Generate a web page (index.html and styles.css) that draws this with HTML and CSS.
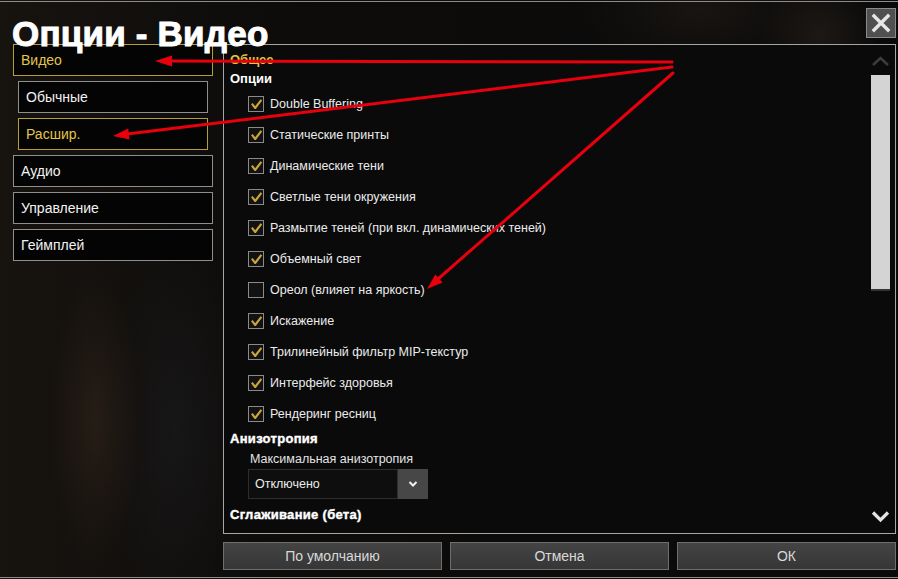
FILE: index.html
```html
<!DOCTYPE html>
<html lang="ru">
<head>
    <meta charset="UTF-8">
    <meta name="viewport" content="width=device-width, initial-scale=1.0">
    <title>Опции - Видео</title>
    <link rel="stylesheet" href="styles.css">
</head>
<body>
    <div class="frame">
        <div class="header">
            <h1 class="title">Опции - Видео</h1>
            <div class="close-btn">
                <svg width="20" height="20" viewBox="0 0 20 20">
                    <path d="M3 3 L17 17 M17 3 L3 17" stroke="#e6e6e6" stroke-width="3.4" stroke-linecap="square"/>
                </svg>
            </div>
        </div>

        <div class="main-row">
            <div class="sidebar">
                <div class="nav-item active">Видео</div>
                <div class="nav-item sub">Обычные</div>
                <div class="nav-item sub active">Расшир.</div>
                <div class="nav-item">Аудио</div>
                <div class="nav-item">Управление</div>
                <div class="nav-item">Геймплей</div>
            </div>

            <div class="panel">
                <div class="panel-content">
                    <div class="group-title">Общее</div>
                    <div class="section-title">Опции</div>

                    <div class="option"><span class="check on"></span>Double Buffering</div>
                    <div class="option"><span class="check on"></span>Статические принты</div>
                    <div class="option"><span class="check on"></span>Динамические тени</div>
                    <div class="option"><span class="check on"></span>Светлые тени окружения</div>
                    <div class="option"><span class="check on"></span>Размытие теней (при вкл. динамических теней)</div>
                    <div class="option"><span class="check on"></span>Объемный свет</div>
                    <div class="option"><span class="check"></span>Ореол (влияет на яркость)</div>
                    <div class="option"><span class="check on"></span>Искажение</div>
                    <div class="option"><span class="check on"></span>Трилинейный фильтр MIP-текстур</div>
                    <div class="option"><span class="check on"></span>Интерфейс здоровья</div>
                    <div class="option"><span class="check on"></span>Рендеринг ресниц</div>

                    <div class="section-title heavy">Анизотропия</div>
                    <div class="field-label">Максимальная анизотропия</div>
                    <div class="select">
                        <span class="select-value">Отключено</span>
                        <span class="select-arrow">
                            <svg width="10" height="8" viewBox="0 0 10 8">
                                <path d="M1.5 2 L5 5.5 L8.5 2" fill="none" stroke="#f0f0f0" stroke-width="2"/>
                            </svg>
                        </span>
                    </div>
                    <div class="section-title heavy last">Сглаживание (бета)</div>
                </div>

                <div class="scrollbar">
                    <svg class="scroll-up" width="19" height="12" viewBox="0 0 19 12">
                        <path d="M2 10 L9.5 3 L17 10" fill="none" stroke="#3c3c3c" stroke-width="2.6"/>
                    </svg>
                    <div class="thumb"></div>
                    <div class="scroll-space"></div>
                    <svg class="scroll-down" width="19" height="13" viewBox="0 0 19 13">
                        <path d="M2 2.5 L9.5 10 L17 2.5" fill="none" stroke="#e4e4e4" stroke-width="3.2"/>
                    </svg>
                </div>
            </div>
        </div>

        <div class="button-row">
            <div class="btn">По умолчанию</div>
            <div class="btn">Отмена</div>
            <div class="btn">ОК</div>
        </div>
    </div>

    <!-- red annotation arrows on top of the screenshot -->
    <svg class="arrows" width="898" height="579" viewBox="0 0 898 579">
        <g stroke="#e8000c" stroke-width="3" stroke-linecap="round">
            <line x1="672" y1="62" x2="168" y2="61"/>
            <line x1="672" y1="67" x2="127" y2="134"/>
            <line x1="673" y1="73" x2="438" y2="279"/>
        </g>
        <g fill="#e8000c">
            <polygon points="155,61 172,55.5 172,66.5"/>
            <polygon points="113,136 129.6,139.5 128.2,128.5"/>
            <polygon points="427,289 442.6,282.4 435.4,274.4"/>
        </g>
    </svg>
</body>
</html>
```

FILE: styles.css
```css
body {
    margin: 0;
    padding: 0;
    position: relative;
    width: 898px;
    height: 579px;
    overflow: hidden;
    font-family: 'Liberation Sans', Arial, sans-serif;
    color: #e8e8e8;
    background-color: #0b0a09;
    background-image:
        radial-gradient(ellipse 45px 150px at 95px 420px, rgba(60, 44, 30, 0.45), transparent),
        radial-gradient(ellipse 70px 200px at 175px 430px, rgba(30, 30, 34, 0.5), transparent),
        radial-gradient(ellipse 60px 60px at 820px 35px, rgba(40, 34, 28, 0.6), transparent),
        radial-gradient(ellipse 120px 60px at 700px 10px, rgba(36, 30, 24, 0.5), transparent),
        linear-gradient(to right, #17130f, #0d0c0b 30%, #0b0a0a);
}
.frame {
    margin-top: 1px;
    height: 575px;
    border-top: 1px solid #8c8c8c;
    border-bottom: 1px solid #8c8c8c;
    padding: 0 2px 0 13px;
    display: flex;
    flex-direction: column;
}
.header {
    height: 42px;
    display: flex;
    justify-content: space-between;
    align-items: flex-start;
}
.title {
    margin: 14px 0 0 -1px;
    font-size: 35px;
    line-height: 35px;
    font-weight: bold;
    color: #ffffff;
    -webkit-text-stroke: 1px #ffffff;
    letter-spacing: 0.2px;
    position: relative;
    z-index: 1;
}
.close-btn {
    margin-top: 6px;
    width: 28px;
    height: 28px;
    border: 1px solid #8a8a8a;
    background-color: #505050;
    display: flex;
    align-items: center;
    justify-content: center;
}
.main-row {
    display: flex;
    gap: 10px;
    height: 490px;
}
.sidebar {
    width: 200px;
    display: flex;
    flex-direction: column;
    gap: 5px;
}
.nav-item {
    height: 30px;
    border: 1px solid #8e8e8e;
    background-color: #040404;
    color: #f2f2f2;
    font-size: 14px;
    line-height: 31px;
    padding-left: 7px;
}
.nav-item.sub {
    margin: 0 5px;
}
.nav-item.active {
    border-color: #b59c3c;
    color: #e2c54a;
}
.panel {
    flex: 1;
    border: 1px solid #a6a6a6;
    background-color: #0a0a0a;
    display: flex;
}
.panel-content {
    flex: 1;
    padding: 5px 0 0 6px;
    overflow: hidden;
}
.group-title {
    height: 19px;
    line-height: 19px;
    font-size: 13px;
    font-weight: bold;
    color: #e5c63e;
}
.section-title {
    height: 19px;
    line-height: 19px;
    font-size: 13px;
    font-weight: bold;
    color: #ffffff;
}
.section-title.heavy {
    height: 20px;
    line-height: 20px;
    -webkit-text-stroke: 0.4px #ffffff;
    letter-spacing: 0.3px;
}
.section-title.last {
    height: 32px;
    line-height: 32px;
}
.option {
    height: 31px;
    display: flex;
    align-items: center;
    padding-left: 18px;
    font-size: 12.5px;
    color: #ececec;
}
.check {
    width: 14px;
    height: 14px;
    border: 1px solid #8a8a8a;
    background-color: #121212;
    margin-right: 6px;
    flex-shrink: 0;
    position: relative;
}
.check.on::after {
    content: "";
    position: absolute;
    left: 2px;
    top: 2px;
    width: 11px;
    height: 10px;
    background-image: url("data:image/svg+xml,%3Csvg xmlns='http://www.w3.org/2000/svg' width='11' height='10' viewBox='0 0 11 10'%3E%3Cpath d='M0.8 4.6 L4.2 9 L10.4 0.8' fill='none' stroke='%23c9a53c' stroke-width='2.2'/%3E%3C/svg%3E");
}
.field-label {
    height: 20px;
    line-height: 20px;
    padding-left: 20px;
    font-size: 12.5px;
    color: #e4e4e4;
}
.select {
    margin-left: 18px;
    width: 180px;
    height: 30px;
    display: flex;
}
.select-value {
    flex: 1;
    border: 1px solid #2e2e2e;
    background-color: #0e0e0e;
    font-size: 12.5px;
    line-height: 28px;
    padding-left: 6px;
    color: #ececec;
}
.select-arrow {
    width: 30px;
    background-color: #474747;
    display: flex;
    align-items: center;
    justify-content: center;
}
.scrollbar {
    width: 24px;
    padding: 10px 3px 10px 2px;
    display: flex;
    flex-direction: column;
    align-items: center;
}
.scroll-up {
    margin-bottom: 8px;
}
.thumb {
    width: 19px;
    height: 214px;
    background-color: #d4d4d4;
    border-bottom: 2px solid #333;
}
.scroll-space {
    flex: 1;
}
.button-row {
    margin: 8px 0 0 210px;
    display: flex;
    gap: 8px;
}
.btn {
    flex: 1;
    height: 26px;
    border: 1px solid #6e6e6e;
    background: linear-gradient(#444444, #363636);
    color: #d9d9d9;
    font-size: 14px;
    line-height: 26px;
    text-align: center;
}
.arrows {
    position: absolute;
    top: 0;
    left: 0;
    pointer-events: none;
}
```
